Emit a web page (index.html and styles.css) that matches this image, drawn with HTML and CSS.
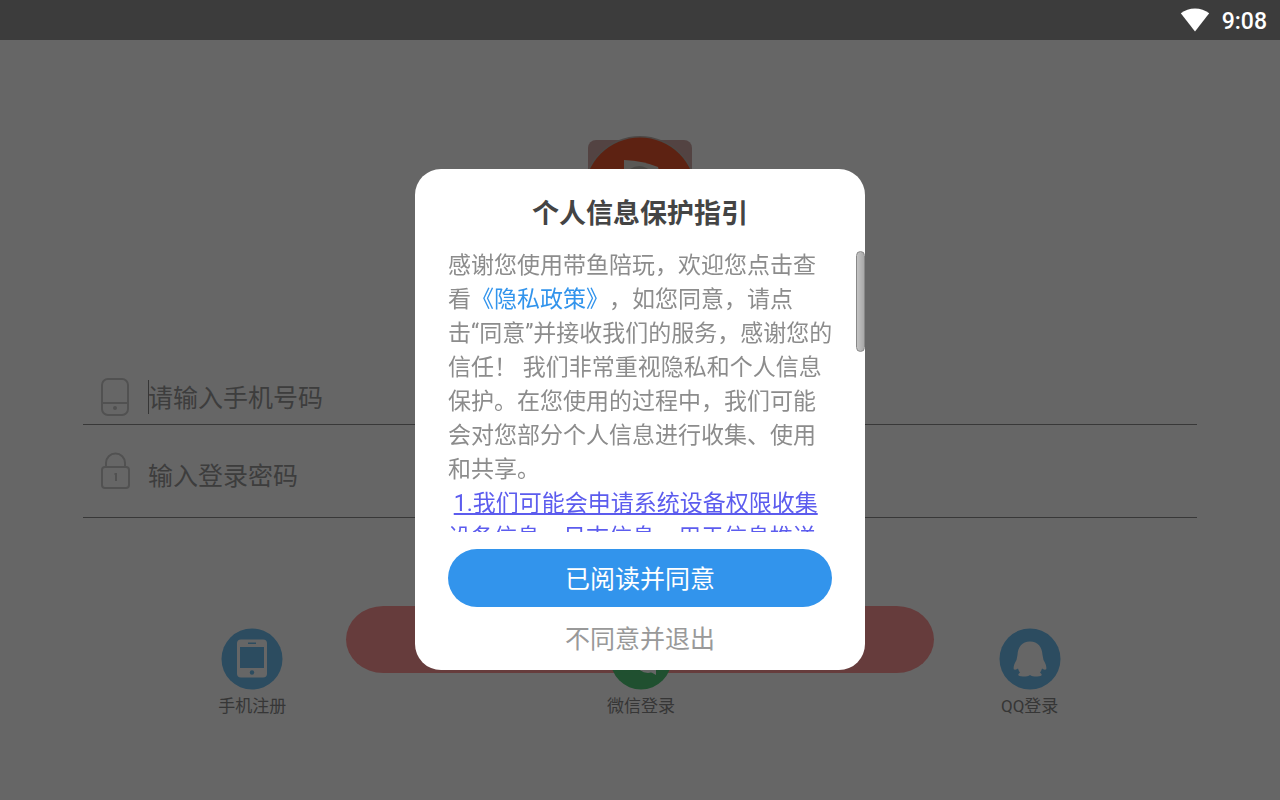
FILE: index.html
```html
<!DOCTYPE html>
<html lang="zh-CN">
<head>
    <meta charset="UTF-8">
    <meta name="viewport" content="width=device-width, initial-scale=1.0">
    <title>带鱼陪玩</title>
    <link rel="stylesheet" href="styles.css">
</head>
<body>
    <header class="status-bar">
        <svg class="wifi" viewBox="0 0 30 24" aria-hidden="true">
            <path d="M15 23.500L.8 5.200Q7 .5 15 .5T29.200 5.200Z" fill="#fff"/>
        </svg>
        <span class="clock">9:08</span>
    </header>
    <main class="login">
        <svg class="logo" viewBox="0 0 104 104" aria-hidden="true">
            <rect y="4" width="104" height="100" rx="8" fill="#cfa8a6"/>
            <circle cx="52" cy="57" r="57" fill="#bfb4ae"/>
            <circle cx="52" cy="57" r="55.500" fill="#e8552f"/>
            <path d="M36 24Q56 25 70 31L78 60H36Z" fill="#e2dcd4"/>
            <path d="M42 33Q54 25 66 38L62 60H42Z" fill="#b8b2aa"/>
        </svg>
        <form class="login-form">
            <div class="field">
                <label for="phone" aria-label="手机号码">
                    <svg class="field-icon" viewBox="0 0 30 40" aria-hidden="true">
                        <rect x="2" y="2" width="26" height="36" rx="6"/>
                        <path d="M2 26H28"/>
                        <circle cx="15" cy="31" r="1"/>
                    </svg>
                </label>
                <span class="caret"></span>
                <input type="tel" id="phone" name="phone" placeholder="请输入手机号码">
            </div>
            <div class="field field-password">
                <label for="password" aria-label="登录密码">
                    <svg class="field-icon" viewBox="0 0 30 40" aria-hidden="true">
                        <rect x="2" y="16" width="27" height="21" rx="3"/>
                        <path d="M6 16V12A9.500 9.500 0 0 1 25 12V16M14.500 23H16V30"/>
                    </svg>
                </label>
                <input type="password" id="password" name="password" placeholder="输入登录密码">
            </div>
            <button type="submit" class="login-button" aria-label="登录"></button>
        </form>
        <nav class="socials">
            <a href="#register">
                <svg viewBox="0 0 62 62" aria-hidden="true">
                    <circle cx="31" cy="31" r="30.500" fill="#6ebef0"/>
                    <rect x="16" y="11.500" width="30" height="38" rx="4" fill="#fff"/>
                    <path d="M19 19H43V40H19ZM27 14.500H35V16H27Z" fill="#6ebef0"/>
                    <circle cx="31" cy="44.500" r="2.200" fill="#6ebef0"/>
                </svg>
                <span>手机注册</span>
            </a>
            <a href="#wechat">
                <svg viewBox="0 0 62 62" aria-hidden="true">
                    <circle cx="31" cy="31" r="30.500" fill="#50c878"/>
                    <ellipse cx="25" cy="25" rx="14" ry="12" fill="#fff"/>
                    <ellipse cx="38" cy="36" rx="11" ry="9" fill="#fff"/>
                    <path d="M39 43L46 47L46 40Z" fill="#fff"/>
                </svg>
                <span>微信登录</span>
            </a>
            <a href="#qq">
                <svg viewBox="0 0 62 62" aria-hidden="true">
                    <circle cx="31" cy="31" r="30.500" fill="#6ebef0"/>
                    <path d="M31 13.500C23 13.500 19 19 18.500 27L17.500 32C15 36 14 40 15 41.500C17 42 18 41 19 40.500Q19.500 42.500 21 44.500C18 47 19 48.500 24 48.500Q29 48.500 31 47Q33 48.500 38 48.500C43 48.500 44 47 41 44.500Q42.500 42.500 43 40.500C44 41 45 42 47 41.500C48 40 47 36 44.500 32L43.500 27C43 19 39 13.500 31 13.500Z" fill="#fff"/>
                </svg>
                <span>QQ登录</span>
            </a>
        </nav>
    </main>
    <div class="overlay">
        <section class="dialog" role="dialog" aria-labelledby="dialog-title">
            <h1 id="dialog-title">个人信息保护指引</h1>
            <div class="dialog-body">
                <p>感谢您使用带鱼陪玩，欢迎您点击查看<a href="#privacy">《隐私政策》</a>，如您同意，请点<span class="keep">击“同意”</span>并接收我们的服务，感谢您的信任！ 我们非常重视隐私和个人信息保护。在您使用的过程中，我们可能会对您部分个人信息进行收集、使用和共享。</p>
                <p class="notice">&nbsp;<u>1.我们可能会申请系统设备权限收集设备信息、日志信息，用于信息推送</u></p>
                <span class="scroll-thumb"></span>
            </div>
            <button type="button" class="agree">已阅读并同意</button>
            <button type="button" class="decline">不同意并退出</button>
        </section>
    </div>
</body>
</html>
```

FILE: styles.css
```css
* {
    box-sizing: border-box;
}

body {
    margin: 0;
    min-height: 100vh;
    display: flex;
    flex-direction: column;
    font-family: Roboto, "Noto Sans CJK SC", sans-serif;
    text-spacing-trim: space-all;
    background-color: #fff;
}

button,
input {
    font-family: inherit;
    border: none;
    padding: 0;
}

/* Status bar */
.status-bar {
    height: 40px;
    padding: 0 13px;
    display: flex;
    align-items: center;
    justify-content: flex-end;
    gap: 12px;
    background-color: #3c3c3c;
    color: #fff;
}

.wifi {
    width: 30px;
    height: 24px;
}

.clock {
    padding-top: 2px;
    font-size: 23px;
    font-weight: 500;
}

/* Login page */
.login {
    flex: 1;
    display: flex;
    flex-direction: column;
    align-items: center;
    padding-top: 96px;
}

.logo {
    width: 104px;
    height: 104px;
}

.login-form {
    width: 100%;
    padding: 0 83px;
    margin-top: 130px;
    display: flex;
    flex-direction: column;
}

.field {
    display: flex;
    align-items: center;
    height: 55px;
    padding: 0 17px;
    border-bottom: 1px solid #8c8c8c;
}

.field-password {
    height: 93px;
}

.field-icon {
    display: block;
    width: 30px;
    height: 40px;
    margin-right: 18px;
    fill: none;
    stroke: #cacaca;
    stroke-width: 2;
}

.caret {
    width: 1px;
    height: 34px;
    margin-right: -1px;
    background-color: #888;
}

.field input {
    flex: 1;
    height: 40px;
    padding-top: 2px;
    font-size: 25px;
    background: transparent;
    outline: none;
}

.field-password input {
    padding-top: 10px;
}

.field input::placeholder {
    color: #999;
    opacity: 1;
}

.login-button {
    align-self: center;
    width: 588px;
    max-width: 100%;
    height: 67px;
    margin-top: 88px;
    border-radius: 38px / 34px;
    background-color: #ff9696;
}

/* The icons overlap the lower part of the login button */
.socials {
    width: 100%;
    margin-top: -45px;
    padding: 0 56px 0 58px;
    display: flex;
}

.socials a {
    position: relative;
    flex: 1;
    display: flex;
    flex-direction: column;
    align-items: center;
    gap: 4px;
    font-size: 17px;
    line-height: 24px;
    color: #888;
    text-decoration: none;
}

.socials svg {
    width: 62px;
    height: 62px;
}

/* Privacy dialog */
.overlay {
    position: fixed;
    top: 40px;
    right: 0;
    bottom: 0;
    left: 0;
    display: flex;
    align-items: center;
    justify-content: center;
    padding-bottom: 1px;
    background-color: rgba(0, 0, 0, 0.6);
}

.dialog {
    width: 450px;
    max-width: 100%;
    padding: 25px 0 0;
    border-radius: 26px;
    background-color: #fff;
    display: flex;
    flex-direction: column;
}

.dialog h1 {
    margin: 0 0 15px;
    font-size: 27px;
    line-height: 40px;
    text-align: center;
    color: #444;
}

.dialog-body {
    position: relative;
    height: 283px;
    padding: 0 30px 0 33px;
    overflow: hidden;
    font-size: 23px;
    line-height: 34px;
    color: #8c8c8c;
}

.dialog-body p {
    margin: 0;
}

.dialog-body a {
    color: #3294ec;
    text-decoration: none;
}

.keep {
    white-space: nowrap;
}

.dialog-body .notice {
    color: #5c5cee;
}

.scroll-thumb {
    position: absolute;
    top: 2px;
    right: 0;
    width: 9px;
    height: 101px;
    border: 1px solid #888;
    border-radius: 5px;
    background: linear-gradient(to right, #c4c4c4, #a8a8a8);
}

.agree,
.decline {
    padding-bottom: 2px;
    font-size: 25px;
    cursor: pointer;
}

.agree {
    height: 58px;
    margin: 17px 33px 0;
    border-radius: 29px;
    background-color: #3294ec;
    color: #fff;
}

.decline {
    height: 63px;
    padding-bottom: 4px;
    background: transparent;
    color: #999;
}
```
